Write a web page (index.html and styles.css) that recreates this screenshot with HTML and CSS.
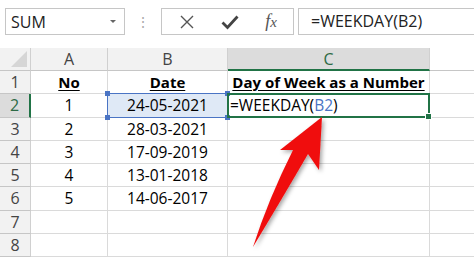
FILE: index.html
```html
<!DOCTYPE html>
<html lang="en">
<head>
  <meta charset="UTF-8">
  <title>WEEKDAY formula</title>
  <link rel="stylesheet" href="styles.css">
</head>
<body>
  <div class="toolbar">
    <div class="name-box">
      <span>SUM</span>
      <span class="caret"></span>
    </div>
    <div class="grip">&#8942;</div>
    <div class="fx-buttons">
      <svg class="ico" width="16" height="16" viewBox="0 0 16 16"><path d="M2 2 L14 14 M14 2 L2 14" stroke="#555" stroke-width="1.4" fill="none"/></svg>
      <svg class="ico" width="18" height="16" viewBox="0 0 18 16"><path d="M1.5 8.5 L6.5 13.5 L16.5 2.5" stroke="#444" stroke-width="2.8" fill="none"/></svg>
      <span class="fx">f<i>x</i></span>
    </div>
    <div class="formula-input">=WEEKDAY(B2)</div>
  </div>

  <div class="sheet">
    <div class="corner"><span class="tri"></span></div>
    <div class="col-head">A</div>
    <div class="col-head">B</div>
    <div class="col-head active">C</div>
    <div class="col-head last"></div>

    <div class="row-head">1</div>
    <div class="cell title">No</div>
    <div class="cell title">Date</div>
    <div class="cell title">Day of Week as a Number</div>
    <div class="cell last"></div>

    <div class="row-head active">2</div>
    <div class="cell">1</div>
    <div class="cell ref">24-05-2021<span class="h tl"></span><span class="h tr"></span><span class="h bl"></span><span class="h br"></span></div>
    <div class="cell edit">=WEEKDAY(<span class="blue">B2</span>)<span class="fill"></span></div>
    <div class="cell last"></div>

    <div class="row-head">3</div>
    <div class="cell">2</div>
    <div class="cell">28-03-2021</div>
    <div class="cell"></div>
    <div class="cell last"></div>

    <div class="row-head">4</div>
    <div class="cell">3</div>
    <div class="cell">17-09-2019</div>
    <div class="cell"></div>
    <div class="cell last"></div>

    <div class="row-head">5</div>
    <div class="cell">4</div>
    <div class="cell">13-01-2018</div>
    <div class="cell"></div>
    <div class="cell last"></div>

    <div class="row-head">6</div>
    <div class="cell">5</div>
    <div class="cell">14-06-2017</div>
    <div class="cell"></div>
    <div class="cell last"></div>

    <div class="row-head">7</div>
    <div class="cell"></div>
    <div class="cell"></div>
    <div class="cell"></div>
    <div class="cell last"></div>

    <div class="row-head">8</div>
    <div class="cell"></div>
    <div class="cell"></div>
    <div class="cell"></div>
    <div class="cell last"></div>

    <!-- red callout arrow pointing at the B2 reference -->
    <svg class="arrow" width="474" height="211" viewBox="0 48 474 211">
      <defs>
        <filter id="sh" x="-20%" y="-20%" width="140%" height="140%">
          <feDropShadow dx="2" dy="2" stdDeviation="2" flood-color="#000" flood-opacity="0.35"/>
        </filter>
      </defs>
      <path d="M322 117 L319 170 L308 154 Q283 197 253 247 Q268 200 293 150 L280 150 Z" fill="#f00f0f" filter="url(#sh)"/>
    </svg>
  </div>
</body>
</html>
```

FILE: styles.css
```css
body {
  margin: 0;
  width: 474px;
  height: 259px;
  overflow: hidden;
  background: #fff;
  font-family: 'Open Sans', sans-serif;
  color: #000;
}

/* formula bar */
.toolbar {
  display: flex;
  align-items: stretch;
  height: 27px;
  padding: 8px 0 0 5px;
  margin-bottom: 13px;
}
.name-box {
  width: 120px;
  border: 1px solid #c6c6c6;
  display: flex;
  align-items: center;
  justify-content: space-between;
  padding: 0 8px 0 5px;
  box-sizing: border-box;
  font-size: 16px;
  color: #222;
}
.caret {
  width: 0;
  height: 0;
  border-left: 3px solid transparent;
  border-right: 3px solid transparent;
  border-top: 3px solid #666;
}
.grip {
  width: 36px;
  text-align: center;
  color: #aaa;
  font-size: 14px;
  line-height: 27px;
}
.fx-buttons {
  width: 133px;
  border: 1px solid #c6c6c6;
  box-sizing: border-box;
  display: flex;
  align-items: center;
  justify-content: space-between;
  padding: 0 16px 0 17px;
}
.fx {
  font-family: 'Liberation Serif', serif;
  font-style: italic;
  font-size: 18px;
  color: #555;
}
.fx i { font-size: 15px; }
.formula-input {
  flex: 1;
  margin-left: 4px;
  border: 1px solid #c6c6c6;
  border-right: none;
  padding-left: 12px;
  font-size: 16px;
  line-height: 25px;
  color: #222;
}

/* sheet grid */
.sheet {
  position: relative;
  display: grid;
  grid-template-columns: 31px 77px 120px 202px 1fr;
  grid-template-rows: 23px repeat(8, 23.25px);
  font-size: 15.5px;
}
.corner, .col-head, .row-head {
  background: #f2f2f2;
  color: #444;
  font-size: 16px;
  box-sizing: border-box;
  border-right: 1px solid #d0d0d0;
  border-bottom: 1px solid #c6c6c6;
  display: flex;
  align-items: center;
  justify-content: center;
}
.corner { position: relative; }
.tri {
  position: absolute;
  right: 3px;
  bottom: 3px;
  width: 0;
  height: 0;
  border-left: 16px solid transparent;
  border-bottom: 16px solid #d6d6d6;
}
.col-head.active {
  background: #dcdcdc;
  color: #2d6a45;
  border-bottom: 2px solid #217346;
}
.col-head.last { background: #fff; border-right: none; }
.row-head.active {
  background: #dcdcdc;
  color: #2d6a45;
  border-right: 2px solid #217346;
}
.cell {
  box-sizing: border-box;
  border-right: 1px solid #dadada;
  border-bottom: 1px solid #dadada;
  display: flex;
  align-items: center;
  justify-content: center;
  white-space: nowrap;
}
.cell.last { border-right: none; }
.title {
  font-weight: bold;
  font-size: 15px;
  text-decoration: underline;
  text-underline-offset: 2px;
}
.ref {
  position: relative;
  background: #dfe9f6;
  border: 1.5px solid #4a74c4;
  margin: -1px 0 0 -1px;
}
.h {
  position: absolute;
  width: 5px;
  height: 5px;
  background: #4a74c4;
}
.h.tl { left: -3px; top: -3px; }
.h.tr { right: -3px; top: -3px; }
.h.bl { left: -3px; bottom: -3px; }
.h.br { right: -3px; bottom: -3px; }
.edit {
  position: relative;
  justify-content: flex-start;
  padding-left: 1px;
  border: 2px solid #217346;
  margin: -1px 0 0 -1px;
}
.blue { color: #4a74c4; }
.fill {
  position: absolute;
  right: -4px;
  bottom: -4px;
  width: 5px;
  height: 5px;
  background: #217346;
  border: 1px solid #fff;
}
.arrow {
  position: absolute;
  left: 0;
  top: 0;
  pointer-events: none;
}
```
